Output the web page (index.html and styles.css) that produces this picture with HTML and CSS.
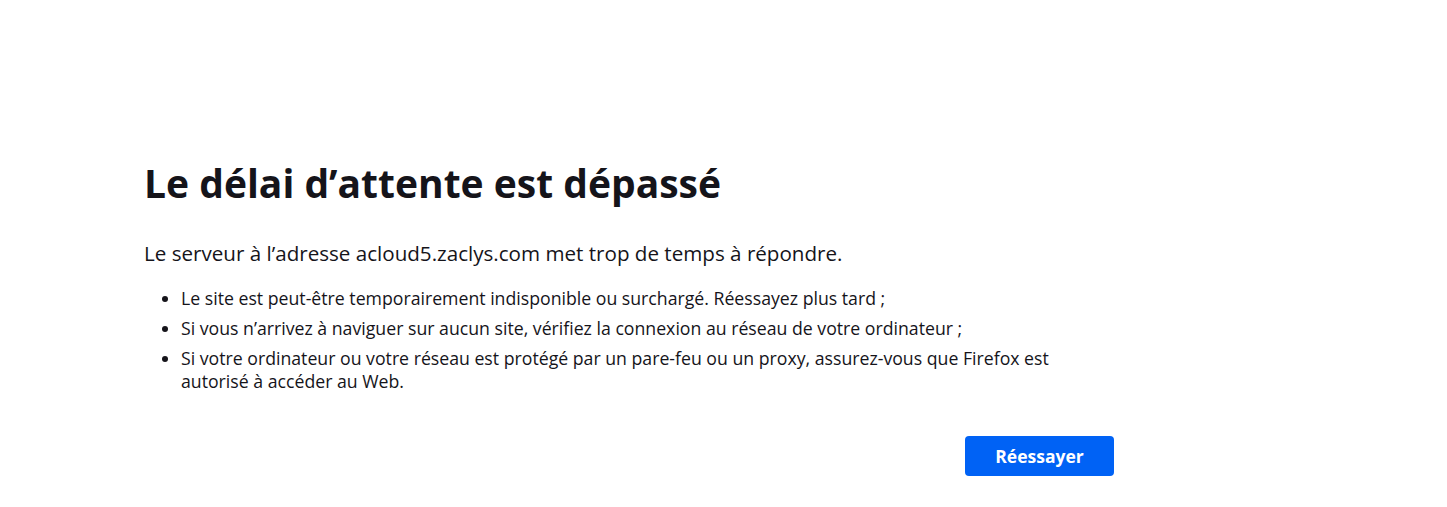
FILE: index.html
```html
<!DOCTYPE html>
<html lang="fr">
<head>
	<meta charset="UTF-8">
	<title>Problème de chargement de la page</title>
	<link rel="stylesheet" href="styles.css">
</head>
<body>
	<div class="container">
		<h1 class="title">Le délai d’attente est dépassé</h1>
		<p class="desc">Le serveur à l’adresse acloud5.zaclys.com met trop de temps à répondre.</p>
		<ul class="tips">
			<li>Le site est peut-être temporairement indisponible ou surchargé. Réessayez plus tard ;</li>
			<li>Si vous n’arrivez à naviguer sur aucun site, vérifiez la connexion au réseau de votre ordinateur ;</li>
			<li>Si votre ordinateur ou votre réseau est protégé par un pare-feu ou un proxy, assurez-vous que Firefox est autorisé à accéder au Web.</li>
		</ul>
		<div class="actions">
			<button type="button" class="btn" id="tryAgain">Réessayer</button>
		</div>
	</div>
</body>
</html>
```

FILE: styles.css
```css
body{
	margin: 0;
	background-color: #fff;
	color: #15141a;
	font-family: "Open Sans", "Lato", sans-serif;
}
.container{
	width: 970px;
	padding: 157px 0 0 144px;
}
.title{
	margin: 0;
	font-size: 39px;
	font-weight: 700;
	line-height: 52px;
}
.desc{
	margin: 30px 0 0;
	font-size: 20.6px;
	line-height: 28px;
}
.tips{
	margin: 20px 0 0;
	padding-left: 37px;
	font-size: 17.7px;
	line-height: 23px;
}
.tips li{
	margin-bottom: 7px;
}
.actions{
	display: flex;
	justify-content: flex-end;
	margin-top: 43px;
}
.btn{
	width: 149px;
	height: 40px;
	border: none;
	border-radius: 4px;
	background-color: #0062f5;
	color: #fff;
	font-family: inherit;
	font-size: 17.5px;
	font-weight: 700;
	cursor: pointer;
}
```
